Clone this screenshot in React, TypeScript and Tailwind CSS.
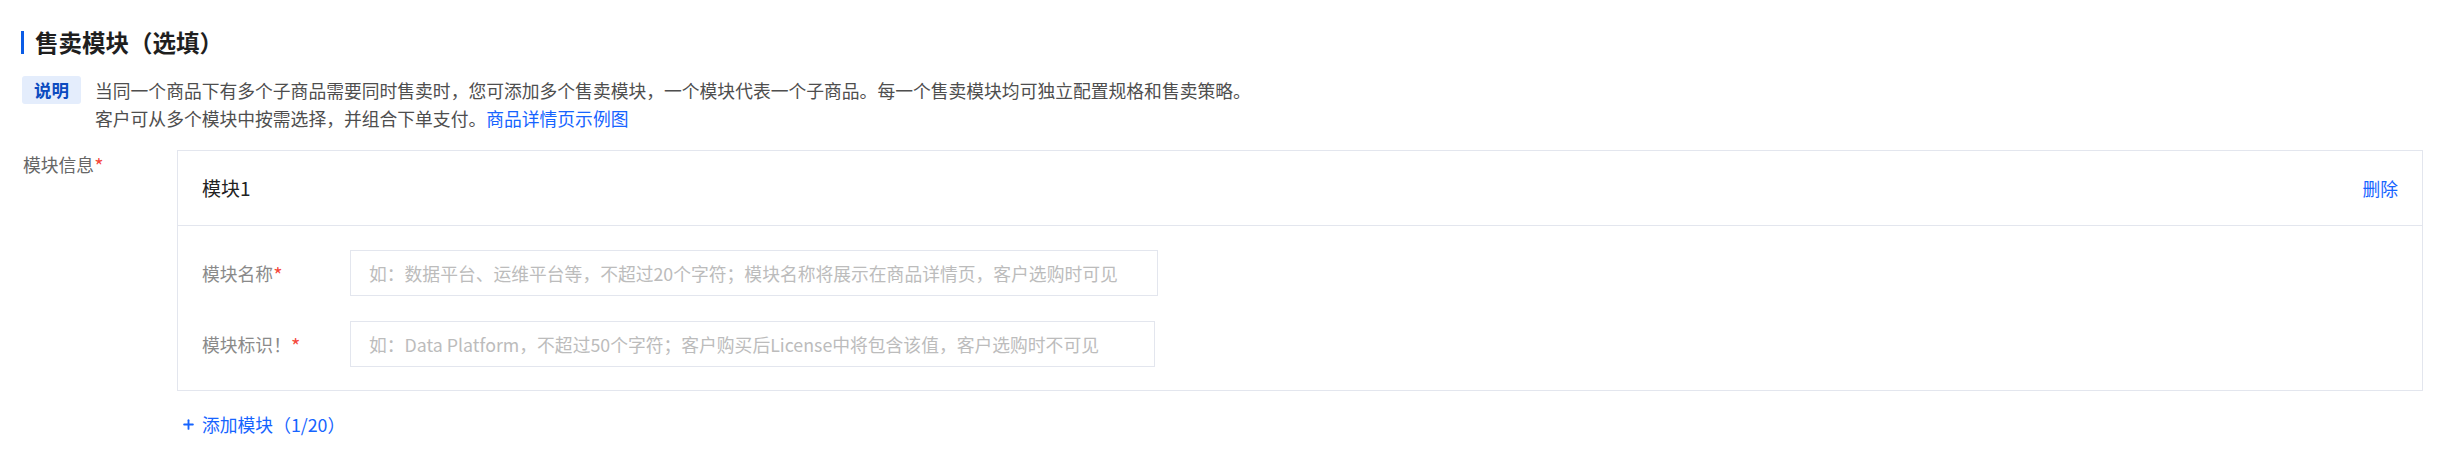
import { Plus } from 'lucide-react'

type FieldProps = {
  label: string
  placeholder: string
  width: string
}

function Star() {
  return <span className="text-[20px] leading-none text-[#f5483b] align-[-2px]">*</span>
}

function Field({ label, placeholder, width }: FieldProps) {
  return (
    <div className="flex items-center">
      <div className="w-[148px] shrink-0 text-[17.8px] leading-[28px] text-[#8a8a8a]">
        {label}
        <Star />
      </div>
      <input
        className={`${width} h-[46px] border border-[#e3e6ee] px-[18px] text-[17.8px] outline-none placeholder:text-[#bcbcbc]`}
        placeholder={placeholder}
      />
    </div>
  )
}

export default function App() {
  return (
    <div className="w-[2452px] h-[460px] bg-white pl-[21px] pt-[31px] font-['Noto_Sans_CJK_SC',sans-serif]">
      <div className="flex items-center">
        <div className="w-[3px] h-[23px] bg-[#0b5ce6]" />
        <h2 className="ml-[11px] text-[23.5px] leading-[23px] font-bold text-[#1f1f1f]">
          售卖模块（选填）
        </h2>
      </div>

      <div className="mt-[22px] flex items-start">
        <span className="ml-[1px] flex h-[28px] w-[59px] shrink-0 items-center justify-center rounded-[3px] bg-[#e4edfc] text-[17.5px] font-bold text-[#0b4bc0]">
          说明
        </span>
        <p className="ml-[14px] text-[17.8px] leading-[28px] text-[#4e4e4e]">
          当同一个商品下有多个子商品需要同时售卖时，您可添加多个售卖模块，一个模块代表一个子商品。每一个售卖模块均可独立配置规格和售卖策略。
          <br />
          客户可从多个模块中按需选择，并组合下单支付。
          <a className="text-[#1664ff]">商品详情页示例图</a>
        </p>
      </div>

      <div className="mt-[18px] flex items-start pr-[29px]">
        <div className="ml-[2px] w-[154px] shrink-0 text-[17.8px] leading-[28px] text-[#666]">
          模块信息
          <Star />
        </div>
        <div className="flex-1">
          <div className="border border-[#e3e6ee]">
            <div className="flex h-[75px] items-center justify-between border-b border-[#e3e6ee] px-[24px]">
              <span className="text-[19px] text-[#222]">模块1</span>
              <a className="text-[17.8px] text-[#1664ff]">删除</a>
            </div>
            <div className="flex flex-col gap-[25px] px-[24px] pt-[24px] pb-[23px]">
              <Field
                label="模块名称"
                width="w-[808px]"
                placeholder="如：数据平台、运维平台等，不超过20个字符；模块名称将展示在商品详情页，客户选购时可见"
              />
              <Field
                label="模块标识！"
                width="w-[805px]"
                placeholder="如：Data Platform，不超过50个字符；客户购买后License中将包含该值，客户选购时不可见"
              />
            </div>
          </div>
          <button className="mt-[19px] ml-[4px] flex items-center gap-[6px] text-[17.8px] leading-[28px] text-[#1664ff]">
            <Plus size={15} strokeWidth={3} />
            添加模块（1/20）
          </button>
        </div>
      </div>
    </div>
  )
}
